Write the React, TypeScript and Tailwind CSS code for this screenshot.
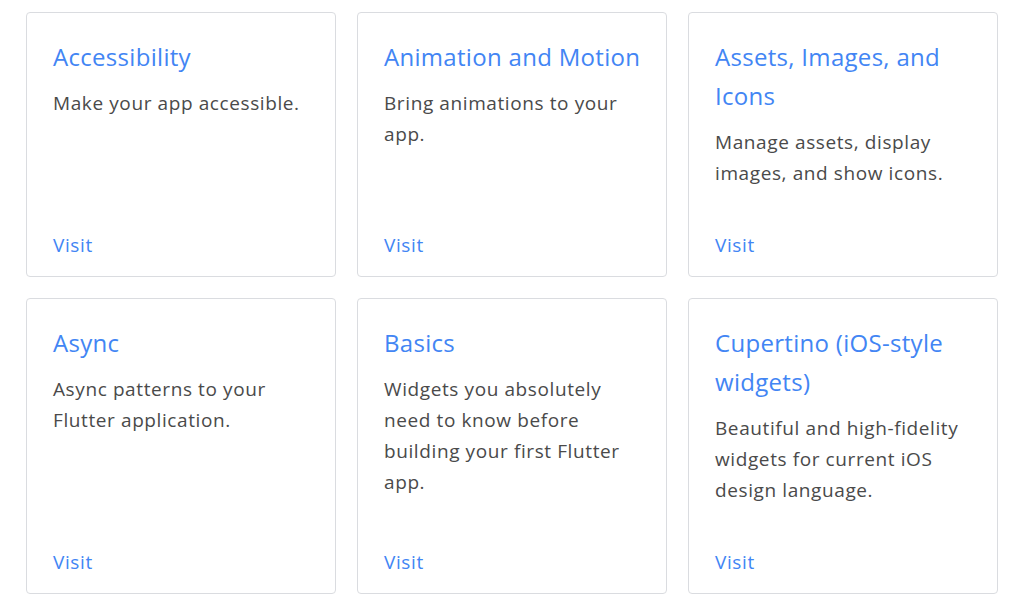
import React from "react";

const cards = [
  { title: "Accessibility", desc: "Make your app accessible." },
  { title: "Animation and Motion", desc: "Bring animations to your app." },
  { title: "Assets, Images, and Icons", desc: "Manage assets, display images, and show icons." },
  { title: "Async", desc: "Async patterns to your Flutter application." },
  { title: "Basics", desc: "Widgets you absolutely need to know before building your first Flutter app." },
  { title: "Cupertino (iOS-style widgets)", desc: "Beautiful and high-fidelity widgets for current iOS design language." },
];

export default function App() {
  return (
    <div className="w-[1024px] h-[604px] bg-white overflow-hidden" style={{ fontFamily: "'Open Sans', Roboto, sans-serif" }}>
      <div className="grid grid-cols-[310px_310px_310px] gap-x-[21px] gap-y-[21px] pl-[26px] pt-[12px]">
        {cards.map((c) => (
          <div key={c.title} className="flex flex-col border border-[#dadce0] rounded-[4px] pl-[26px] pr-[28px] pt-[24px] pb-[15px]">
            <div className="mr-[-8px] text-[24px] leading-[39px] tracking-[0.3px] text-[#4285f4]">{c.title}</div>
            <div className="mt-[12px] text-[19px] leading-[31px] tracking-[0.6px] text-[#4a4a4a]">{c.desc}</div>
            <div className="flex-1" />
            <div className="mt-[41px] text-[19px] leading-[31px] tracking-[0.6px] text-[#4285f4]">Visit</div>
          </div>
        ))}
      </div>
    </div>
  );
}
